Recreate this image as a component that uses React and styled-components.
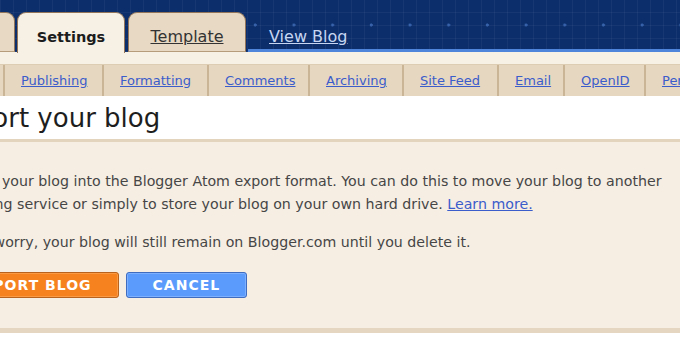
import React from "react";
import styled, { createGlobalStyle } from "styled-components";

const GlobalStyle = createGlobalStyle`
  html, body {
    margin: 0;
    background: #ffffff;
    overflow: hidden;
  }
  body {
    font-family: "DejaVu Sans", Verdana, sans-serif;
  }
`;

const subTabs = [
  { label: "", width: 3 },
  { label: "Publishing", width: 99 },
  { label: "Formatting", width: 105 },
  { label: "Comments", width: 101 },
  { label: "Archiving", width: 94 },
  { label: "Site Feed", width: 95 },
  { label: "Email", width: 66 },
  { label: "OpenID", width: 81 },
  { label: "Permissions", width: 110 },
];

function App() {
  return (
    <>
      <GlobalStyle />
      <Page>
        <Header>
          <Tab $width={15} $stub />
          <Tab $width={108} $active>
            Settings
          </Tab>
          <Tab $width={118}>
            <TabLink href="#">Template</TabLink>
          </Tab>
          <HeaderRest>
            <ViewBlog href="#">View Blog</ViewBlog>
          </HeaderRest>
        </Header>
        <Strip />
        <SubNav>
          {subTabs.map((t, i) => (
            <SubItem key={i} $width={t.width} $first={i === 0}>
              {t.label && <SubLink href="#">{t.label}</SubLink>}
            </SubItem>
          ))}
        </SubNav>
        <TitleBar>
          <Title>Export your blog</Title>
        </TitleBar>
        <Panel>
          <Cropped>
            <Text>
              Export your blog into the Blogger Atom export format. You can do
              this to move your blog to another
              <br />
              blogging service or simply to store your blog on your own hard
              drive. <MoreLink href="#">Learn more.</MoreLink>
            </Text>
            <Text $gap={15}>
              Don't worry, your blog will still remain on Blogger.com until you
              delete it.
            </Text>
            <Buttons>
              <Button $tone="orange" $shift={-7}>EXPORT BLOG</Button>
              <Button $tone="blue">CANCEL</Button>
            </Buttons>
          </Cropped>
        </Panel>
      </Page>
    </>
  );
}

export default App;

/* styling */

const Page = styled.div`
  width: 680px;
  height: 350px;
  overflow: hidden;
`;

const Header = styled.div`
  height: 52px;
  display: flex;
  align-items: flex-end;
  gap: 2px;
  background-color: #0c2e6b;
  background-image:
    radial-gradient(circle at 23px 25px, #3863ab 0 1.3px, transparent 1.8px),
    repeating-linear-gradient(90deg, rgba(255,255,255,0.045) 0 1px, transparent 1px 13px),
    repeating-linear-gradient(0deg, rgba(255,255,255,0.045) 0 1px, transparent 1px 13px);
  background-size: 38.7px 52px, auto, auto;
`;

const Tab = styled.div`
  box-sizing: border-box;
  width: ${(p) => p.$width}px;
  height: ${(p) => (p.$active ? 41 : 40)}px;
  margin-bottom: ${(p) => (p.$active ? -1 : 0)}px;
  margin-right: ${(p) => (p.$active ? 1 : 0)}px;
  display: flex;
  justify-content: center;
  padding-top: 15px;
  background: ${(p) => (p.$active ? "#f7f0e5" : "#e7d9c3")};
  border: 1px solid #93765a;
  border-bottom: ${(p) => (p.$active ? "none" : "1px solid #b79c7c")};
  border-left: ${(p) => (p.$stub ? "none" : "1px solid #93765a")};
  border-radius: ${(p) => (p.$stub ? "0 9px 0 0" : "9px 9px 0 0")};
  font-size: 14.5px;
  line-height: 18px;
  font-weight: bold;
  color: #1c1c1c;
`;

const TabLink = styled.a`
  font-size: 16px;
  font-weight: normal;
  color: #333333;
  text-decoration: underline;
`;

const HeaderRest = styled.div`
  flex: 1;
  align-self: stretch;
  display: flex;
  align-items: flex-end;
  padding: 0 0 3px 21px;
  border-bottom: 3px solid #4f86dc;
`;

const ViewBlog = styled.a`
  font-size: 16px;
  line-height: 18px;
  color: #c6d6f2;
  text-decoration: underline;
`;

const Strip = styled.div`
  height: 12px;
  background: #f7f0e5;
`;

const SubNav = styled.div`
  height: 32px;
  display: flex;
  background: #e6d7c0;
  border-top: 1px solid #ddcdb3;
  box-sizing: border-box;
`;

const SubItem = styled.div`
  box-sizing: border-box;
  flex: none;
  width: ${(p) => p.$width}px;
  display: flex;
  align-items: center;
  padding-left: ${(p) => (p.$first ? 0 : 16)}px;
  border-left: ${(p) => (p.$first ? "none" : "2px solid #cab597")};
`;

const SubLink = styled.a`
  font-size: 13px;
  color: #3b5ccb;
  text-decoration: underline;
  white-space: nowrap;
`;

const TitleBar = styled.div`
  height: 43px;
  border-bottom: 3px solid #e3d4be;
  overflow: hidden;
`;

const Title = styled.h1`
  margin: 7px 0 0 -56px;
  font-size: 26px;
  line-height: 30px;
  font-weight: normal;
  color: #1e1e1e;
  white-space: nowrap;
`;

const Panel = styled.div`
  background: #f6eee3;
  border-bottom: 5px solid #e4d6c1;
  padding: 28px 0 30px;
  overflow: hidden;
`;

const Cropped = styled.div`
  margin-left: -49px;
`;

const Text = styled.p`
  margin: ${(p) => p.$gap || 0}px 0 0;
  font-size: 14.2px;
  line-height: 23px;
  color: #464646;
  white-space: nowrap;
`;

const MoreLink = styled.a`
  color: #3b5ccb;
  text-decoration: underline;
`;

const Buttons = styled.div`
  display: flex;
  gap: 7px;
  margin-top: 18px;
`;

const Button = styled.button`
  height: 26px;
  padding: 0 26px;
  margin-left: ${(p) => p.$shift || 0}px;
  border-radius: 3px;
  font-family: "DejaVu Sans", Verdana, sans-serif;
  font-size: 14px;
  font-weight: bold;
  letter-spacing: 1px;
  color: #ffffff;
  background: ${(p) => (p.$tone === "orange" ? "#f6821f" : "#5b9bfb")};
  border: 1px solid ${(p) => (p.$tone === "orange" ? "#b8621d" : "#3f6cbf")};
  box-shadow: inset 0 0 0 1px ${(p) => (p.$tone === "orange" ? "#fb9a45" : "#7db0ff")};
`;
